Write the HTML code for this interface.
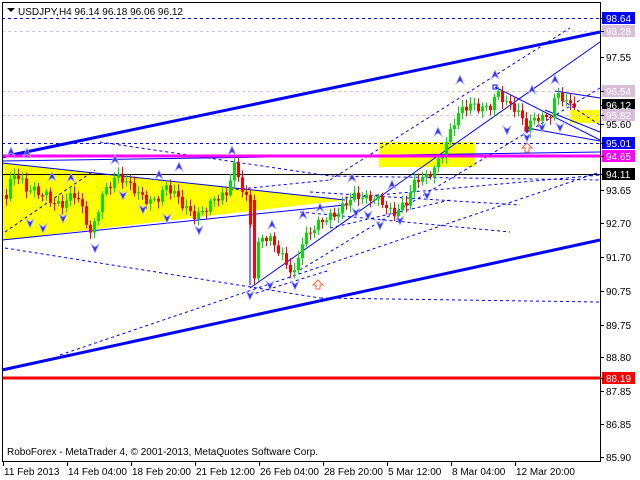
<!DOCTYPE html>
<html><head><meta charset="utf-8">
<style>
html,body{margin:0;padding:0;background:#fff;width:640px;height:480px;overflow:hidden}
svg{display:block;font-family:"Liberation Sans",sans-serif}
</style></head><body>
<svg id="c" width="640" height="480" xmlns="http://www.w3.org/2000/svg">
<rect x="0" y="0" width="640" height="480" fill="#fff"/>
<polygon points="2,163 345,200 2,240" fill="#ffff00"/>
<rect x="379" y="142" width="96" height="25" fill="#ffff00"/>
<rect x="570" y="110" width="30" height="13" fill="#ffff00"/>
<line x1="379" y1="155" x2="475" y2="155" stroke="#fff" stroke-dasharray="3,2"/>
<g stroke-width="1" stroke-dasharray="3,3">
<line x1="2" y1="18.5" x2="600" y2="18.5" stroke="#0000ff"/>
<line x1="2" y1="143.5" x2="600" y2="143.5" stroke="#0000ff"/>
<line x1="2" y1="31.5" x2="600" y2="31.5" stroke="#d8bfd8"/>
<line x1="2" y1="91.5" x2="600" y2="91.5" stroke="#d8bfd8"/>
<line x1="2" y1="115.5" x2="600" y2="115.5" stroke="#d8bfd8"/>
</g>
<line x1="2" y1="174.5" x2="600" y2="174.5" stroke="#000"/>
<g stroke="#0000ff" stroke-width="1" stroke-dasharray="3,3" fill="none">
<polyline points="100,142 330,176 600,180"/>
<line x1="5" y1="248" x2="320" y2="298"/>
<line x1="320" y1="298" x2="600" y2="302"/>
<line x1="60" y1="355" x2="600" y2="172"/>
<line x1="5" y1="232" x2="95" y2="170"/>
<line x1="230" y1="190" x2="330" y2="180"/>
<line x1="330" y1="180" x2="570" y2="28"/>
<line x1="330" y1="228" x2="450" y2="200"/>
<line x1="300" y1="270" x2="600" y2="88"/>
<line x1="310" y1="192" x2="520" y2="205"/>
<line x1="300" y1="212" x2="510" y2="232"/>
<line x1="345" y1="198" x2="600" y2="175"/>
<line x1="562" y1="100" x2="600" y2="125"/>
<line x1="250" y1="295" x2="330" y2="270"/>
</g>
<g stroke="#0000ff" stroke-width="1" fill="none">
<line x1="2" y1="163" x2="345" y2="200"/>
<line x1="2" y1="240" x2="345" y2="205"/>
<line x1="2" y1="161" x2="600" y2="152"/>
<line x1="250" y1="288" x2="600" y2="42"/>
<line x1="495" y1="87" x2="600" y2="140"/>
<line x1="555" y1="91" x2="600" y2="98"/>
<line x1="527" y1="128" x2="600" y2="141"/>
<line x1="545" y1="110" x2="600" y2="132"/>
<line x1="250" y1="285" x2="250" y2="200"/>
</g>
<rect x="493" y="85" width="4" height="4" fill="none" stroke="#0000ff"/>
<rect x="525" y="127" width="4" height="4" fill="none" stroke="#0000ff"/>
<g id="cd"></g>
<line x1="2" y1="157" x2="600" y2="32" stroke="#0000ff" stroke-width="3"/>
<line x1="2" y1="370" x2="600" y2="240" stroke="#0000ff" stroke-width="3"/>
<line x1="2" y1="156" x2="600" y2="156" stroke="#ff00ff" stroke-width="3"/>
<line x1="2" y1="378" x2="600" y2="378" stroke="#ff0000" stroke-width="3"/>
<g id="ar"></g>
<g fill="none" stroke="#ff6040" stroke-width="1">
<path d="M318,280 l-5,5 h3 v4 h4 v-4 h3 z"/>
<path d="M527,143 l-5,5 h3 v4 h4 v-4 h3 z"/>
</g>
<rect x="2.5" y="2.5" width="598" height="459" fill="none" stroke="#000"/>
<path d="M7,8 h8 l-4,4 z" fill="#000"/>
<text x="18" y="15" font-size="10" fill="#000">USDJPY,H4  96.14 96.18 96.06 96.12</text>
<text x="7" y="455" font-size="10" fill="#000">RoboForex - MetaTrader 4, © 2001-2013, MetaQuotes Software Corp.</text>
<g id="ax" font-size="10" fill="#000"></g>
</svg>
<script>
(function(){
var NS="http://www.w3.org/2000/svg";
function el(p,t,a,txt){var e=document.createElementNS(NS,t);for(var k in a)e.setAttribute(k,a[k]);if(txt)e.textContent=txt;p.appendChild(e);return e;}
var kp=[[4,195],[12,172],[25,195],[45,190],[60,205],[75,200],[90,232],[100,190],[115,180],[125,188],[140,192],[155,198],[165,192],[180,205],[195,210],[210,205],[225,200],[232,162],[240,180],[248,200],[252,280],[258,240],[268,245],[280,255],[293,268],[300,240],[315,232],[330,215],[342,200],[350,195],[365,205],[380,198],[392,208],[405,205],[415,185],[425,178],[440,150],[452,125],[458,118],[470,108],[490,100],[496,90],[505,108],[515,115],[525,125],[535,110],[548,118],[556,98],[565,108],[574,102]];
function base(x){for(var i=0;i<kp.length-1;i++){if(x>=kp[i][0]&&x<=kp[i+1][0]){var t=(x-kp[i][0])/(kp[i+1][0]-kp[i][0]);return kp[i][1]+t*(kp[i+1][1]-kp[i][1]);}}return kp[kp.length-1][1];}
var g=document.getElementById("cd");var prev=base(4);
for(var x=5;x<=573;x+=4){var c=base(x)+Math.sin(x*1.7)*6+Math.sin(x*0.53)*4;var o=prev;if(x==253){o=200;}
var hi=Math.min(o,c)-2-Math.abs(Math.sin(x*2.3))*5,lo=Math.max(o,c)+2+Math.abs(Math.cos(x*1.9))*5;
var col=c<o?"#00e000":(c>o?"#ff0000":"#000");var ty=Math.min(o,c),h=Math.max(Math.abs(c-o),1);
el(g,"line",{x1:x+1.5,x2:x+1.5,y1:hi,y2:lo,stroke:col,"stroke-width":1});
el(g,"rect",{x:x,y:ty,width:3,height:h,fill:col});prev=c;}
var ar=document.getElementById("ar");
var up=[[11,152],[27,153],[115,160],[179,167],[52,177],[71,178],[159,175],[232,151],[272,225],[303,215],[460,80],[495,75],[438,132],[532,90],[555,80],[352,178],[392,185],[320,208]];
var dn=[[30,223],[43,228],[63,218],[123,195],[143,209],[167,218],[199,230],[507,130],[527,137],[542,127],[560,127],[356,212],[368,215],[380,225],[400,220],[427,195],[95,248],[250,295],[270,285],[295,285]];
up.forEach(function(p){el(ar,"path",{d:"M"+p[0]+","+(p[1]-5)+" l4,9 l-4,-3 l-4,3 z",fill:"#3030ff",stroke:"#b0b0ff","stroke-width":0.8});});
dn.forEach(function(p){el(ar,"path",{d:"M"+p[0]+","+(p[1]+5)+" l4,-9 l-4,3 l-4,-3 z",fill:"#3030ff",stroke:"#b0b0ff","stroke-width":0.8});});
var ax=document.getElementById("ax");
var pl=[["98.64",18,"#0000ff","#fff"],["98.28",31,"#d8bfd8","#fff"],["97.55",57],["96.54",91,"#d8bfd8","#fff"],["96.12",105,"#000","#fff"],["95.82",115,"#d8bfd8","#fff"],["95.60",124],["95.01",143,"#0000ff","#fff"],["94.65",156,"#ff00ff","#fff"],["94.11",174,"#000","#fff"],["93.65",190],["92.70",223],["91.70",257],["90.75",291],["89.75",325],["88.80",357],["88.19",378,"#ff0000","#fff"],["87.85",391],["86.85",424],["85.90",457]];
pl.forEach(function(p){if(p[2]){el(ax,"rect",{x:602,y:p[1]-6,width:33,height:12,fill:p[2]});}
el(ax,"line",{x1:600,x2:604,y1:p[1]+0.5,y2:p[1]+0.5,stroke:"#000"});
el(ax,"text",{x:606,y:p[1]+4,fill:p[3]||"#000"},p[0]);});
var tl=["11 Feb 2013","14 Feb 04:00","18 Feb 20:00","21 Feb 12:00","26 Feb 04:00","28 Feb 20:00","5 Mar 12:00","8 Mar 04:00","12 Mar 20:00"];
tl.forEach(function(t,i){var x=3+i*64;el(ax,"line",{x1:x+0.5,x2:x+0.5,y1:462,y2:466,stroke:"#000"});el(ax,"text",{x:x+1,y:475},t);});
})();
</script>
</body></html>
